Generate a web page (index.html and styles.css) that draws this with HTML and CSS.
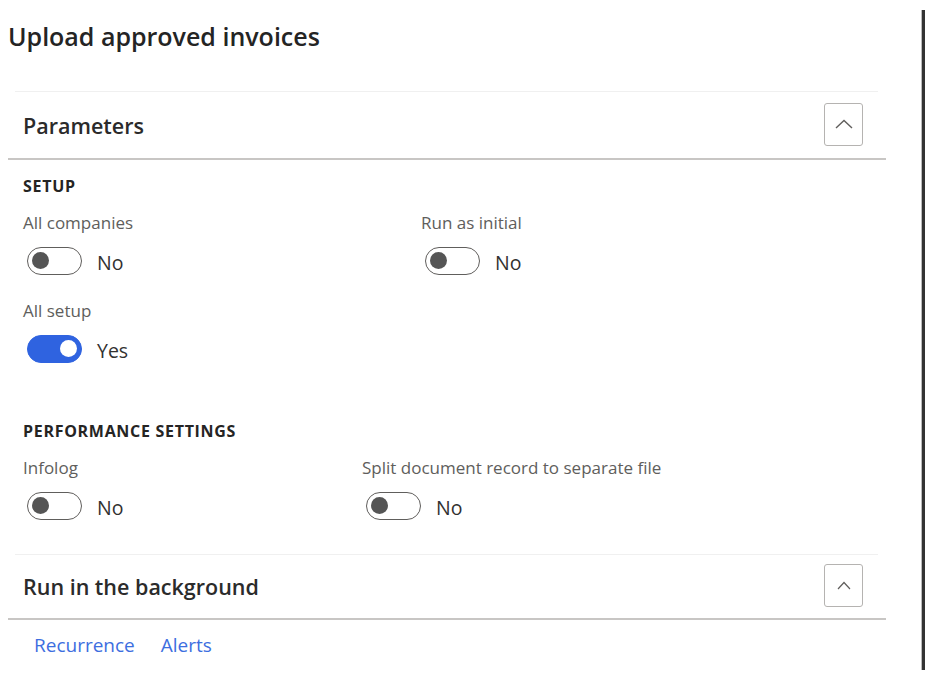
FILE: index.html
```html
<!DOCTYPE html>
<html>
<head>
    <meta charset="UTF-8">
    <title>Upload approved invoices</title>
    <link rel="stylesheet" href="styles.css">
</head>
<body>
    <div class="page">
        <h1 class="page-title">Upload approved invoices</h1>

        <!-- Parameters fast tab -->
        <div class="tab-line"></div>
        <div class="tab-header">
            <h2 class="tab-title">Parameters</h2>
            <button class="collapse-btn" type="button">
                <svg width="18" height="10" viewBox="0 0 18 10"><polyline points="1,9 9,1.5 17,9" fill="none" stroke="#605e5c" stroke-width="1.4"/></svg>
            </button>
        </div>
        <div class="tab-body">
            <div class="group-title">SETUP</div>
            <div class="field-grid setup-grid">
                <div class="field">
                    <label>All companies</label>
                    <div class="toggle-row"><span class="toggle"></span><span class="toggle-text">No</span></div>
                </div>
                <div class="field">
                    <label>Run as initial</label>
                    <div class="toggle-row"><span class="toggle"></span><span class="toggle-text">No</span></div>
                </div>
                <div class="field">
                    <label>All setup</label>
                    <div class="toggle-row"><span class="toggle on"></span><span class="toggle-text">Yes</span></div>
                </div>
            </div>

            <div class="group-title perf">PERFORMANCE SETTINGS</div>
            <div class="field-grid perf-grid">
                <div class="field">
                    <label>Infolog</label>
                    <div class="toggle-row"><span class="toggle"></span><span class="toggle-text">No</span></div>
                </div>
                <div class="field">
                    <label>Split document record to separate file</label>
                    <div class="toggle-row"><span class="toggle"></span><span class="toggle-text">No</span></div>
                </div>
            </div>
        </div>

        <!-- Run in the background fast tab -->
        <div class="tab-line next"></div>
        <div class="tab-header small">
            <h2 class="tab-title">Run in the background</h2>
            <button class="collapse-btn" type="button">
                <svg width="14" height="9" viewBox="0 0 14 9"><polyline points="1,8 7,1.5 13,8" fill="none" stroke="#605e5c" stroke-width="1.2"/></svg>
            </button>
        </div>
        <div class="links">
            <a href="#">Recurrence</a>
            <a href="#">Alerts</a>
        </div>
    </div>
</body>
</html>
```

FILE: styles.css
```css
html, body {
    margin: 0;
    padding: 0;
    background: #fff;
}
body {
    font-family: "Open Sans", "Noto Sans", sans-serif;
    color: #201f1e;
    height: 679px;
    overflow: hidden;
    position: relative;
}
/* dark frame edge on the right */
body:after {
    content: "";
    position: absolute;
    top: 10px;
    bottom: 9px;
    left: 921px;
    width: 4px;
    background: #333;
    border-left: 1px solid #bbb;
}
.page {
    width: 878px;
    padding: 20px 0 0 8px;
}
.page-title {
    margin: 0;
    font-size: 25px;
    font-weight: 600;
    line-height: 32px;
    color: #242424;
}
.tab-line {
    margin: 39px 8px 0 7px;
    border-top: 1px solid #f0f0f0;
}
.tab-line.next {
    margin-top: 34px;
}
.tab-header {
    height: 66px;
    display: flex;
    align-items: center;
    justify-content: space-between;
    padding: 0 23px 0 15px;
    border-bottom: 2px solid #c8c6c4;
}
.tab-header.small {
    height: 63px;
}
.tab-title {
    margin: 0;
    font-size: 21.5px;
    font-weight: 600;
    color: #2b2b2b;
}
.collapse-btn {
    width: 39px;
    height: 43px;
    padding: 0;
    margin-top: -2px;
    background: #fff;
    border: 1px solid #b5b3b1;
    border-radius: 3px;
    display: flex;
    align-items: center;
    justify-content: center;
}
.tab-body {
    padding: 16px 0 0 15px;
}
.group-title {
    font-size: 16px;
    font-weight: 700;
    line-height: 20px;
    letter-spacing: 0.7px;
    color: #252423;
}
.group-title.perf {
    margin-top: 58px;
}
.field-grid {
    display: grid;
    row-gap: 26px;
    margin-top: 17px;
}
.setup-grid {
    grid-template-columns: 398px 1fr;
}
.perf-grid {
    grid-template-columns: 339px 1fr;
    margin-top: 17px;
}
.field label {
    display: block;
    font-size: 17px;
    line-height: 20px;
    color: #605e5c;
    margin-bottom: 14px;
}
.toggle-row {
    display: flex;
    align-items: center;
    padding-left: 4px;
    height: 28px;
}
.toggle {
    box-sizing: border-box;
    width: 55px;
    height: 28px;
    border: 1.5px solid #605e5c;
    border-radius: 14px;
    position: relative;
    background: #fff;
}
.toggle:before {
    content: "";
    position: absolute;
    left: 4px;
    top: 4px;
    width: 17px;
    height: 17px;
    border-radius: 50%;
    background: #555;
}
.toggle.on {
    background: #2f63e0;
    border-color: #2f63e0;
}
.toggle.on:before {
    left: auto;
    right: 4px;
    background: #fff;
}
.toggle-text {
    margin-left: 15px;
    font-size: 19.5px;
    color: #323130;
    line-height: 20px;
    padding-top: 3px;
}
.links {
    padding: 15px 0 0 26px;
    display: flex;
    gap: 26px;
}
.links a {
    font-size: 19px;
    line-height: 20px;
    color: #3d6ee0;
    text-decoration: none;
}
```
